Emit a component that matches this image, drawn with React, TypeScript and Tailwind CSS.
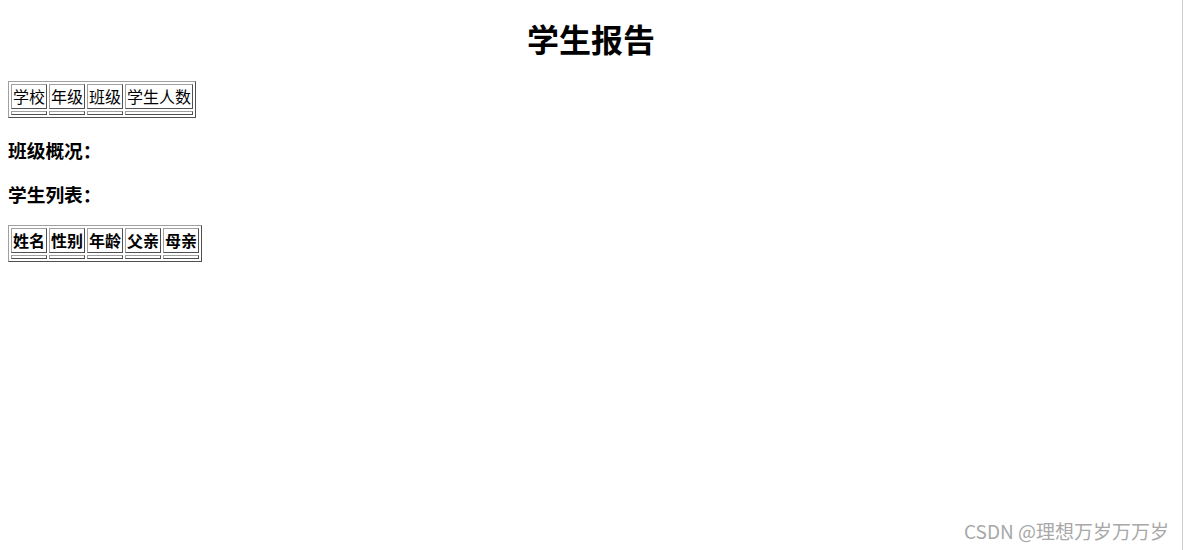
const schoolCols = ['学校', '年级', '班级', '学生人数']
const studentCols = ['姓名', '性别', '年龄', '父亲', '母亲']

const cell = 'border border-t-[#a0a0a0] border-l-[#a0a0a0] border-b-[#505050] border-r-[#505050] p-px leading-[21px]'

function ReportTable({ cols, bold }: { cols: string[]; bold?: boolean }) {
  return (
    <table className="border-separate border-spacing-[2px] border border-t-[#a0a0a0] border-l-[#a0a0a0] border-b-[#505050] border-r-[#505050]">
      <thead>
        <tr>
          {cols.map(c => (
            <th key={c} className={`${cell} ${bold ? 'font-bold' : 'font-normal'} text-center`}>{c}</th>
          ))}
        </tr>
      </thead>
      <tbody>
        <tr>
          {cols.map(c => (
            <td key={c} className={cell}></td>
          ))}
        </tr>
      </tbody>
    </table>
  )
}

export default function App() {
  return (
    <div className="relative flex h-[550px] bg-white text-black text-base font-['Microsoft_YaHei','Noto_Sans_CJK_SC',sans-serif]">
      <div className="flex-1 px-2">
        <h1 className="mt-[19px] mb-[24px] text-center text-[32px] font-bold leading-[38px]">学生报告</h1>
        <ReportTable cols={schoolCols} />
        <h3 className="my-[19px] text-[18.72px] font-bold leading-[25px]">班级概况：</h3>
        <h3 className="my-[19px] text-[18.72px] font-bold leading-[25px]">学生列表：</h3>
        <ReportTable cols={studentCols} bold />
      </div>
      <div className="w-px bg-[#cfcfcf]" />
      <div className="absolute right-[14px] bottom-[5px] text-[19px] leading-[28px] text-[#a8a8a8] font-['Noto_Sans_CJK_SC',sans-serif]">
        CSDN @理想万岁万万岁
      </div>
    </div>
  )
}
